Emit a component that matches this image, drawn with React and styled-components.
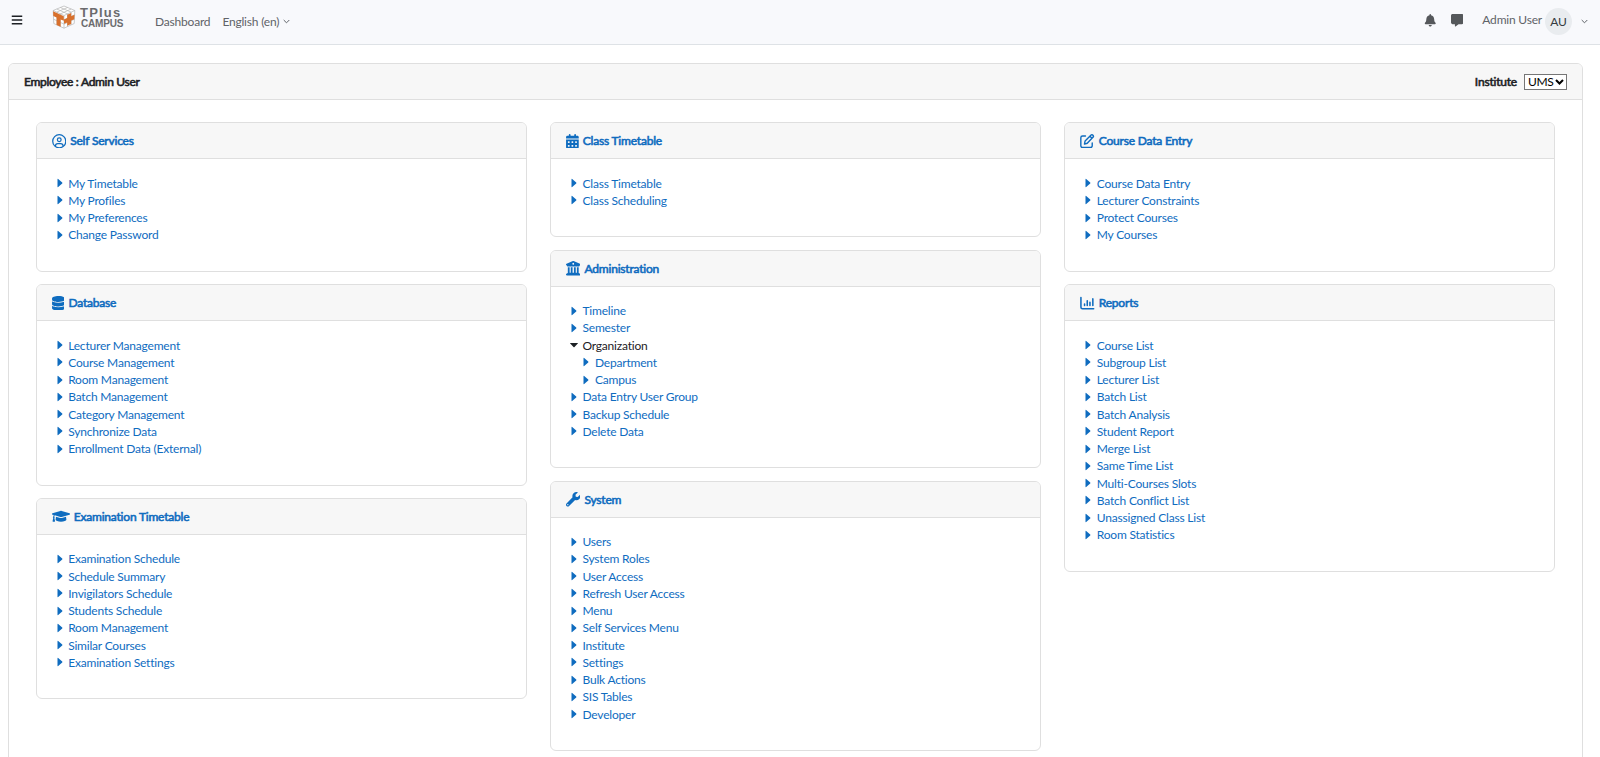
import styled, { createGlobalStyle } from "styled-components";
import { FaBars, FaBell, FaGraduationCap, FaWrench } from "react-icons/fa";
import {
  FaBuildingColumns,
  FaCalendarDays,
  FaDatabase,
  FaMessage,
} from "react-icons/fa6";

const GlobalStyle = createGlobalStyle`
* {
  box-sizing: border-box;
}
body {
  margin: 0;
  background: #fff;
  color: #1d2125;
  font-family: Lato, "Open Sans", sans-serif;
  font-size: 12px;
  line-height: 17.25px;
  letter-spacing: -0.2px;
  font-variant-ligatures: none;
  overflow: hidden;
}
`;
const Page = styled.div`
  height: 757px;
  overflow: hidden;
`;
const Navbar = styled.nav`
  display: flex;
  align-items: flex-start;
  height: 45px;
  padding: 0 12px 0 11px;
  background: #f8f9fc;
  border-bottom: 1px solid #dee2e6;
  color: #5f6368;
`;
const MenuButton = styled.div`
  display: flex;
  margin: 14px 29px 0 0;
  font-size: 12px;
  color: #1d2125;
`;
const Brand = styled.div`
  display: flex;
  margin-top: 5px;
  width: 103px;
`;
const BrandText = styled.div`
  margin-left: 4px;
  padding-top: 2px;
  font-family: "Liberation Sans", Arial, sans-serif;
  font-weight: bold;
  color: #6b6b6d;
`;
const BrandTop = styled.div`
  font-size: 13px;
  line-height: 11px;
  letter-spacing: 1.2px;
`;
const BrandBottom = styled.div`
  padding-left: 1px;
  font-size: 10px;
  line-height: 12px;
  letter-spacing: -0.2px;
`;
const NavLink = styled.div`
  display: flex;
  align-items: center;
  gap: 4px;
  margin: 13px 12px 0 0;
`;
const NavRight = styled.div`
  display: flex;
  margin-left: auto;
`;
const NavIcon = styled.div`
  display: flex;
  margin: 14px 14px 0 0;
  font-size: 12.5px;
  color: #55585b;
`;
const UserName = styled.div`
  margin: 11px 3px 0 5px;
`;
const Avatar = styled.div`
  width: 27px;
  height: 27px;
  margin-top: 8px;
  border-radius: 50%;
  background: #e9ecef;
  color: #343a40;
  text-align: center;
  line-height: 27px;
`;
const UserCaret = styled.div`
  display: flex;
  margin: 19px 0 0 9px;
`;
const Panel = styled.section`
  height: 720px;
  margin: 18px 17px 0 8px;
  border: 1px solid #dfdfdf;
  border-radius: 6px;
`;
const PanelHeader = styled.header`
  display: flex;
  justify-content: space-between;
  align-items: center;
  height: 36.4px;
  padding: 0 15px;
  background: #f7f7f7;
  border-bottom: 1px solid #dfdfdf;
  border-radius: 5px 5px 0 0;
  -webkit-text-stroke: 0.6px currentColor;
`;
const Title = styled.span`
  letter-spacing: -0.3px;
`;
const Institute = styled.label`
  display: flex;
  align-items: center;
  gap: 7px;
`;
const SelectBox = styled.span`
  display: flex;
  align-items: center;
  width: 43px;
  height: 16px;
  padding-left: 3px;
  border: 1px solid #767676;
  background: #fff;
  color: #000;
  -webkit-text-stroke: 0;
`;
const Select = styled.select`
  appearance: none;
  width: 27px;
  height: 14px;
  padding: 0;
  border: 0;
  background: transparent;
  color: inherit;
  font: inherit;
  line-height: 14px;
  letter-spacing: -0.4px;
`;
const Columns = styled.main`
  display: grid;
  grid-template-columns: repeat(3, 491px);
  gap: 23.3px;
  align-items: start;
  padding: 22px 26.7px;
`;
const Column = styled.div`
  display: grid;
  gap: 12.5px;
`;
const Card = styled.article`
  border: 1px solid #dfdfdf;
  border-radius: 6px;
`;
const CardHeader = styled.header`
  display: flex;
  align-items: center;
  height: 36px;
  padding: 0 0 0 15px;
  background: #f7f7f7;
  border-bottom: 1px solid #dfdfdf;
  border-radius: 5px 5px 0 0;
  color: #0f6cbf;
  -webkit-text-stroke: 0.6px currentColor;

  svg {
    width: ${(p) => p.$iconWidth || 14.5}px;
    height: 14.5px;
    margin-right: 4px;
  }
`;
const List = styled.ul`
  list-style: none;
  margin: 0;
  padding: 15.2px 0 27.3px 19px;
`;
const Item = styled.li`
  display: flex;
  align-items: center;
  height: 17.25px;
  padding-left: ${(p) => (p.$nested ? 12.5 : 0)}px;
  color: ${(p) => (p.$open ? "#1d2125" : "#0f6cbf")};

  svg {
    flex: none;
    margin-right: 4.5px;
  }
`;

const Chevron = () => (
  <svg width="7" height="5" viewBox="0 0 7 5" fill="none" stroke="currentColor">
    <path d="M.7 1 3.5 3.8 6.3 1" />
  </svg>
);
const SelectArrow = () => (
  <svg width="9" height="6" viewBox="0 0 9 6" fill="none" stroke="currentColor" strokeWidth="2">
    <path d="m1 1 3.5 3.5L8 1" />
  </svg>
);
const CaretRight = () => (
  <svg width="8" height="10" viewBox="0 0 8 10" fill="currentColor">
    <path d="M1.5 1.2q0-.7.7-.3l4 3.6q.5.5 0 1l-4 3.6q-.7.4-.7-.3z" />
  </svg>
);
const CaretDown = () => (
  <svg width="8" height="10" viewBox="0 0 8 10" fill="currentColor">
    <path d="M.4 3h7.2q.6.1.2.6L4.5 7q-.5.4-1 0L.2 3.6Q-.2 3.1.4 3z" />
  </svg>
);
const UserOutline = () => (
  <svg viewBox="0 0 14 14" fill="none" stroke="currentColor" strokeWidth="1.2">
    <circle cx="7" cy="7" r="6.3" />
    <circle cx="7" cy="5.6" r="1.8" />
    <path d="M3.2 11.7q.2-2.4 2.4-2.4h2.8q2.2 0 2.4 2.4" />
  </svg>
);
const PenSquare = () => (
  <svg viewBox="0 0 14 14" fill="none" stroke="currentColor" strokeWidth="1.35" strokeLinecap="round" strokeLinejoin="round">
    <path d="M5.3 2H2.5Q.8 2 .8 3.7v7.7q0 1.7 1.7 1.7h7.6q1.7 0 1.7-1.7V8.7" />
    <path d="m4.3 9.8.6-3L10.7 1q.9-.7 1.8.2t.2 1.8L7 8.9zM9.6 2.2l2 2" />
  </svg>
);
const BarChart = () => (
  <svg viewBox="0 0 14 14" fill="none" stroke="currentColor" strokeWidth="1.5" strokeLinecap="round">
    <path d="M.9 1.4v9.4q0 1.5 1.5 1.5h10.8M4.4 7.8v1.4M7 4.5v4.7M9.6 6v3.2M12.4 2.8v6.4" />
  </svg>
);
const CubeLogo = () => (
  <svg width="24" height="24" viewBox="0 0 24 24">
    <path fill="#fff" stroke="#b5b5b5" strokeWidth=".7" d="m12 1 10.8 4.5-.6 13L12 23.2 1.8 18.5 1.2 5.5z" />
    <path fill="none" stroke="#b5b5b5" strokeWidth=".7" d="m4.8 4 10.8 4.9M8.4 2.5l10.7 4.6M15.6 2.5 4.8 7.1M19.2 4 8.4 8.9M1.2 5.5l10.8 5 10.8-5M12 10.5v12.7M1.4 9.8 12 14.9l10.6-5.1M1.6 14.2 12 19.1l10.4-4.9M4.9 7.2v12.7M8.4 8.9v12.7M15.6 8.9v12.7M19.1 7.2v12.7" />
    <path fill="#d8702c" d="m1.1 6.3 10.7 5v4.5L8.6 14.5v7.3l-4-1.9v-7.3l-3.3-1.5zM15.2 9.7l4-1.8v3.4l3.3-1.5-.2 4.4-3.1 1.4v3.3l-4 1.8v-3.3l-3.2 1.4v-4.4l3.2-1.4z" />
  </svg>
);

const columns = [
  [
    {
      title: "Self Services",
      icon: <UserOutline />,
      items: ["My Timetable", "My Profiles", "My Preferences", "Change Password"],
    },
    {
      title: "Database",
      icon: <FaDatabase />,
      iconWidth: 12.8,
      items: ["Lecturer Management", "Course Management", "Room Management", "Batch Management", "Category Management", "Synchronize Data", "Enrollment Data (External)"],
    },
    {
      title: "Examination Timetable",
      icon: <FaGraduationCap />,
      iconWidth: 18,
      items: ["Examination Schedule", "Schedule Summary", "Invigilators Schedule", "Students Schedule", "Room Management", "Similar Courses", "Examination Settings"],
    },
  ],
  [
    {
      title: "Class Timetable",
      icon: <FaCalendarDays />,
      iconWidth: 12.8,
      items: ["Class Timetable", "Class Scheduling"],
    },
    {
      title: "Administration",
      icon: <FaBuildingColumns />,
      items: ["Timeline", "Semester", { label: "Organization", children: ["Department", "Campus"] }, "Data Entry User Group", "Backup Schedule", "Delete Data"],
    },
    {
      title: "System",
      icon: <FaWrench />,
      items: ["Users", "System Roles", "User Access", "Refresh User Access", "Menu", "Self Services Menu", "Institute", "Settings", "Bulk Actions", "SIS Tables", "Developer"],
    },
  ],
  [
    {
      title: "Course Data Entry",
      icon: <PenSquare />,
      items: ["Course Data Entry", "Lecturer Constraints", "Protect Courses", "My Courses"],
    },
    {
      title: "Reports",
      icon: <BarChart />,
      items: ["Course List", "Subgroup List", "Lecturer List", "Batch List", "Batch Analysis", "Student Report", "Merge List", "Same Time List", "Multi-Courses Slots", "Batch Conflict List", "Unassigned Class List", "Room Statistics"],
    },
  ],
];

const renderItem = (item, nested) => {
  if (item.children) {
    return [
      <Item key={item.label} $open><CaretDown />{item.label}</Item>,
      ...item.children.map((child) => renderItem(child, true)),
    ];
  }
  return <Item key={item} $nested={nested}><CaretRight />{item}</Item>;
};

const MenuCard = ({ title, icon, iconWidth, items }) => (
  <Card>
    <CardHeader $iconWidth={iconWidth}>{icon}{title}</CardHeader>
    <List>{items.map((item) => renderItem(item, false))}</List>
  </Card>
);

const App = () => {
  return (
    <Page>
      <GlobalStyle />
      <Navbar>
        <MenuButton><FaBars /></MenuButton>
        <Brand>
          <CubeLogo />
          <BrandText>
            <BrandTop>TPlus</BrandTop>
            <BrandBottom>CAMPUS</BrandBottom>
          </BrandText>
        </Brand>
        <NavLink>Dashboard</NavLink>
        <NavLink>English (en)<Chevron /></NavLink>
        <NavRight>
          <NavIcon><FaBell /></NavIcon>
          <NavIcon><FaMessage /></NavIcon>
          <UserName>Admin User</UserName>
          <Avatar>AU</Avatar>
          <UserCaret><Chevron /></UserCaret>
        </NavRight>
      </Navbar>
      <Panel>
        <PanelHeader>
          <Title>Employee : Admin User</Title>
          <Institute>
            Institute
            <SelectBox>
              <Select defaultValue="UMS"><option>UMS</option></Select>
              <SelectArrow />
            </SelectBox>
          </Institute>
        </PanelHeader>
        <Columns>
          {columns.map((cards, i) => (
            <Column key={i}>
              {cards.map((card) => <MenuCard key={card.title} {...card} />)}
            </Column>
          ))}
        </Columns>
      </Panel>
    </Page>
  );
};

export default App;
